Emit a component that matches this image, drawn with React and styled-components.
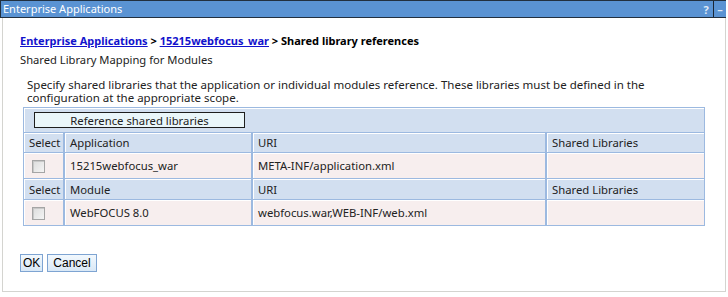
import React from "react";
import styled, { createGlobalStyle } from "styled-components";

const Global = createGlobalStyle`
  html, body { margin: 0; padding: 0; background: #fff; }
  body { font-family: "Noto Sans", "DejaVu Sans", sans-serif; }
`;

const Portlet = styled.div`
  width: 728px;
  height: 297px;
  box-sizing: border-box;
  display: flex;
  flex-direction: column;
`;

const TitleBar = styled.div`
  height: 18px;
  box-sizing: border-box;
  margin-right: 2px;
  background: #5a93d3;
  border: 1px solid #22303f;
  border-right: none;
  display: flex;
  align-items: center;
  justify-content: space-between;
  color: #fff;
  font-size: 11px;
  padding-left: 2px;
`;

const TitleText = styled.span`
  line-height: 16px;
`;

const TitleIcons = styled.div`
  display: flex;
  align-items: stretch;
  height: 100%;
  font-weight: bold;
`;

const TitleIcon = styled.span`
  width: ${(p) => p.$w}px;
  display: flex;
  align-items: center;
  justify-content: center;
  color: #dfe9f6;
  border-left: ${(p) => (p.$sep ? "1px solid #1a2533" : "none")};
  font-size: 11px;
`;

const Body = styled.div`
  flex: none;
  height: 274px;
  margin: 0 2px;
  border: 1px solid #d4d4d0;
  border-top: none;
  padding: 16px 0 0 17px;
  box-sizing: border-box;
`;

const Breadcrumb = styled.div`
  font-size: 11px;
  font-weight: bold;
  line-height: 14px;
  color: #000;
`;

const Crumb = styled.a`
  color: #1212cc;
  text-decoration: underline;
`;

const SubTitle = styled.div`
  margin-top: 5px;
  font-size: 11.2px;
  line-height: 14px;
  color: #222;
`;

const Description = styled.p`
  margin: 11px 0 0 7px;
  font-size: 11.5px;
  line-height: 13px;
  color: #222;
  width: 660px;
`;

const Table = styled.table`
  margin: 3px 0 0 3px;
  width: 682px;
  border-collapse: separate;
  border-spacing: 0;
  background: #9cb9e0;
  border: 1px solid #9cb9e0;
  font-size: 11.3px;
  color: #222;
  table-layout: fixed;
`;

const ToolbarCell = styled.td`
  background: #d2dff0;
  height: 24px;
  padding: 0 0 0 10px;
  box-shadow: inset 1px 1px 0 #fff;
  border-bottom: 1px solid #9cb9e0;
`;

const ActionButton = styled.button`
  width: 211px;
  height: 16px;
  padding: 0;
  border: 1.5px solid #1e1e1e;
  background: #eaf6fa;
  font-family: "Noto Sans", "DejaVu Sans", sans-serif;
  font-size: 11.3px;
  line-height: 13px;
  color: #222;
  display: block;
`;

const HeadCell = styled.th`
  background: #d2dff0;
  height: ${(p) => p.$h}px;
  padding: 0 0 0 5px;
  text-align: left;
  font-weight: normal;
  box-shadow: inset 1px 1px 0 #fff;
  border-right: ${(p) => (p.$last ? "none" : "2px solid #9cb9e0")};
  border-bottom: 1px solid #9cb9e0;
  white-space: nowrap;
`;

const DataCell = styled.td`
  background: #f7eeee;
  height: ${(p) => p.$h}px;
  padding: 0 0 0 ${(p) => (p.$pad ? p.$pad : 5)}px;
  box-shadow: inset 1px 1px 0 #fff;
  border-right: ${(p) => (p.$last ? "none" : "2px solid #9cb9e0")};
  border-bottom: ${(p) => (p.$bottom ? "none" : "1px solid #9cb9e0")};
  white-space: nowrap;
`;

const Check = styled.span`
  display: block;
  width: 11px;
  height: 11px;
  margin-top: 1px;
  border: 1px solid #a5a5a5;
  background: linear-gradient(135deg, #dcdcdc, #f4f4f4);
  box-shadow: inset 1px 1px 0 #c8c8c8;
`;

const Buttons = styled.div`
  margin-top: 28px;
  display: flex;
  gap: 4px;
`;

const FormButton = styled.button`
  height: 18px;
  padding: 0 ${(p) => p.$px}px;
  border: 1px solid #7ea4d2;
  background: linear-gradient(#f2f8fd, #d9e8f6);
  font-family: "Liberation Sans", Arial, sans-serif;
  font-size: 12px;
  color: #000;
  line-height: 16px;
`;

const headerCols = [
  { w: 41 },
  { w: 188 },
  { w: 294 },
  { w: 157 },
];

export default function App() {
  return (
    <>
      <Global />
      <Portlet>
        <TitleBar>
          <TitleText>Enterprise Applications</TitleText>
          <TitleIcons>
            <TitleIcon $w={14}>?</TitleIcon>
            <TitleIcon $w={12} $sep>–</TitleIcon>
          </TitleIcons>
        </TitleBar>
        <Body>
          <Breadcrumb>
            <Crumb href="#">Enterprise Applications</Crumb> &gt;{" "}
            <Crumb href="#">15215webfocus_war</Crumb> &gt; Shared library references
          </Breadcrumb>
          <SubTitle>Shared Library Mapping for Modules</SubTitle>
          <Description>
            Specify shared libraries that the application or individual modules reference. These
            libraries must be defined in the configuration at the appropriate scope.
          </Description>
          <Table>
            <colgroup>
              {headerCols.map((c, i) => (
                <col key={i} style={{ width: c.w }} />
              ))}
            </colgroup>
            <tbody>
              <tr>
                <ToolbarCell colSpan={4}>
                  <ActionButton>Reference shared libraries</ActionButton>
                </ToolbarCell>
              </tr>
              <tr>
                <HeadCell $h={19}>Select</HeadCell>
                <HeadCell $h={19}>Application</HeadCell>
                <HeadCell $h={19}>URI</HeadCell>
                <HeadCell $h={19} $last>Shared Libraries</HeadCell>
              </tr>
              <tr>
                <DataCell $h={25} $pad={8}>
                  <Check />
                </DataCell>
                <DataCell $h={25}>15215webfocus_war</DataCell>
                <DataCell $h={25}>META-INF/application.xml</DataCell>
                <DataCell $h={25} $last></DataCell>
              </tr>
              <tr>
                <HeadCell $h={20}>Select</HeadCell>
                <HeadCell $h={20}>Module</HeadCell>
                <HeadCell $h={20}>URI</HeadCell>
                <HeadCell $h={20} $last>Shared Libraries</HeadCell>
              </tr>
              <tr>
                <DataCell $h={25} $pad={8} $bottom>
                  <Check />
                </DataCell>
                <DataCell $h={25} $bottom>WebFOCUS 8.0</DataCell>
                <DataCell $h={25} $bottom>webfocus.war,WEB-INF/web.xml</DataCell>
                <DataCell $h={25} $last $bottom></DataCell>
              </tr>
            </tbody>
          </Table>
          <Buttons>
            <FormButton $px={2}>OK</FormButton>
            <FormButton $px={5}>Cancel</FormButton>
          </Buttons>
        </Body>
      </Portlet>
    </>
  );
}
